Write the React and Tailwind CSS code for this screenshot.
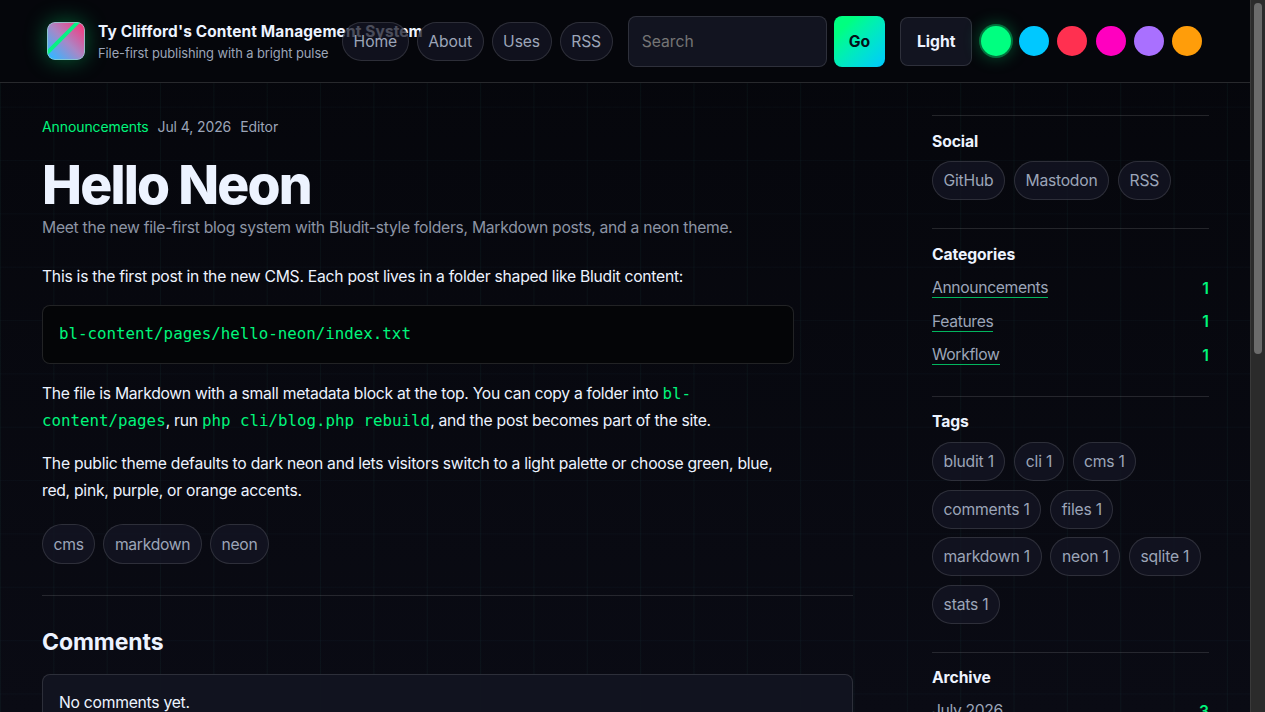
import { useState } from "react";
import clsx from "clsx";

const navLinks = ["Home", "About", "Uses", "RSS"];

const accents = [
  { name: "Green", color: "bg-[#00ff80]" },
  { name: "Blue", color: "bg-[#00c8ff]" },
  { name: "Red", color: "bg-[#ff3050]" },
  { name: "Pink", color: "bg-[#ff00bf]" },
  { name: "Purple", color: "bg-[#a970ff]" },
  { name: "Orange", color: "bg-[#ff9d0a]" },
];

const categories = ["Announcements", "Features", "Workflow"];

const tags = ["bludit", "cli", "cms", "comments", "files", "markdown", "neon", "sqlite", "stats"];

const Chip = ({ children, className }) => (
  <a
    href="#"
    className={clsx(
      "flex items-center rounded-full border border-white/12 bg-[#141624]/75 px-[10.6px] text-[15.7px] whitespace-nowrap text-[#9ca5b8]",
      className
    )}
  >
    {children}
  </a>
);

const Code = ({ children }) => (
  <code className="font-['DejaVu_Sans_Mono',monospace] text-[15.8px] tracking-normal text-[#00f57b]">
    {children}
  </code>
);

const Logo = () => (
  <svg
    viewBox="0 0 38 38"
    className="size-[38px] shrink-0 rounded-[8px] shadow-[0_0_22px_rgba(0,255,128,0.36)]"
  >
    <defs>
      <linearGradient id="logo" x1="0" y1="1" x2="1" y2="0">
        <stop offset="0.1" stopColor="#39b4ff" />
        <stop offset="0.5" stopColor="#a987c6" />
        <stop offset="0.9" stopColor="#f23f83" />
      </linearGradient>
      <clipPath id="logoBox">
        <rect width="38" height="38" rx="8" />
      </clipPath>
    </defs>
    <g clipPath="url(#logoBox)">
      <rect width="38" height="38" fill="url(#logo)" />
      <path d="M-2 33 L34 -3" stroke="#08f184" strokeWidth="3.8" />
    </g>
    <rect x="0.5" y="0.5" width="37" height="37" rx="7.5" fill="none" stroke="#8fd0d0" strokeOpacity="0.8" />
  </svg>
);

const Header = () => {
  const [accent, setAccent] = useState("Green");

  return (
    <header className="flex h-[83px] shrink-0 items-center border-b border-white/14 bg-[#05060b] pl-[47px]">
      {/* Brand, the long title runs under the nav */}
      <div className="flex w-[295px] items-center gap-[13px]">
        <Logo />
        <div className="w-[240px] pt-[2px] whitespace-nowrap">
          <div className="text-[15.4px] leading-[23px] font-bold tracking-[0.15px] text-[#edf3ff]">
            Ty Clifford's Content Management System
          </div>
          <div className="text-[12.9px] leading-[22px] tracking-[-0.07px] text-[#9ca5b8]">
            File-first publishing with a bright pulse
          </div>
        </div>
      </div>

      <nav className="relative flex gap-2">
        {navLinks.map((label) => (
          <Chip key={label} className="h-[39px] pt-[2px] tracking-[-0.12px]">
            {label}
          </Chip>
        ))}
      </nav>

      <form className="ml-[15px] flex gap-[7px]">
        <input
          type="search"
          placeholder="Search"
          className="h-[51px] w-[199px] rounded-[8px] border border-white/12 bg-[#121420] px-[13px] text-[15.7px] placeholder:text-[#757575]"
        />
        <button
          type="button"
          className="h-[51px] w-[51.5px] rounded-[8px] bg-linear-135 from-[#00ff80] from-20% to-[#00c8ff] pt-[2px] text-[15.7px] font-bold text-[#031018]"
        >
          Go
        </button>
      </form>

      <button className="ml-[15px] h-[49px] w-[72px] rounded-[8px] border border-white/12 bg-[#121420] pt-[2px] text-[15.7px] font-bold text-[#edf3ff]">
        Light
      </button>

      <div className="ml-[8.5px] flex gap-[8.3px]">
        {accents.map(({ name, color }) => (
          <button
            key={name}
            aria-label={name}
            onClick={() => setAccent(name)}
            className={clsx(
              "size-[30px] rounded-full",
              color,
              accent === name && "shadow-[0_0_0_2px_rgba(0,255,128,0.35),0_0_18px_rgba(0,255,128,0.4)]"
            )}
          />
        ))}
      </div>
    </header>
  );
};

const Article = () => (
  <main className="w-[811px] pt-[31px]">
    <div className="flex h-6 items-center gap-[9px] text-[14px] tracking-[-0.1px] text-[#9ca5b8]">
      <a href="#" className="text-[#00f57b]">
        Announcements
      </a>
      <span>Jul 4, 2026</span>
      <span>Editor</span>
    </div>

    <h1 className="mt-[19px] text-[53.4px] leading-[56px] font-extrabold tracking-[-1.8px] text-[#edf3ff]">
      Hello Neon
    </h1>
    <p className="mt-px text-[15.7px] leading-[27px] tracking-[-0.28px] text-[#8c94a4]">
      Meet the new file-first blog system with Bludit-style folders, Markdown posts, and a neon theme.
    </p>

    <div className="mt-[22px] w-[752px] text-[15.7px] leading-[27px] tracking-[-0.26px] text-[#edf3ff]">
      <p>This is the first post in the new CMS. Each post lives in a folder shaped like Bludit content:</p>
      <pre className="mt-[15px] flex h-[59px] items-center rounded-[8px] border border-white/12 bg-[#040507] px-[16px] pb-[2px]">
        <Code>bl-content/pages/hello-neon/index.txt</Code>
      </pre>
      <p className="mt-4">
        <span className="tracking-[-0.29px]">
          The file is Markdown with a small metadata block at the top. You can copy a folder into{" "}
        </span>
        <Code>bl-<br />content/pages</Code>, run <Code>php cli/blog.php rebuild</Code>, and the post becomes part
        of the site.
      </p>
      <p className="mt-4">
        The public theme defaults to dark neon and lets visitors switch to a light palette or choose green, blue,
        red, pink, purple, or orange accents.
      </p>
    </div>

    <div className="mt-5 flex gap-2">
      {["cms", "markdown", "neon"].map((tag) => (
        <Chip key={tag} className="h-10 pt-px tracking-[-0.3px]">
          {tag}
        </Chip>
      ))}
    </div>

    <section className="mt-[31px] border-t border-white/12 pt-[30px]">
      <h2 className="text-[23px] leading-[32px] font-bold tracking-[-0.1px] text-[#edf3ff]">Comments</h2>
      <p className="mt-[16px] h-[60px] rounded-[8px] border border-white/12 bg-[#121420]/95 px-4 pt-[14px] text-[15.7px] leading-[27px] tracking-[-0.26px] text-[#edf3ff]">
        No comments yet.
      </p>
    </section>
  </main>
);

const Panel = ({ title, className, children }) => (
  <section className={clsx("border-t border-white/12 pt-[11.5px]", className)}>
    <h2 className="text-[15.7px] leading-[27px] font-bold tracking-[-0.1px] text-[#edf3ff]">{title}</h2>
    {children}
  </section>
);

const CountRow = ({ label, count }) => (
  <li className="flex h-[33.3px] items-center justify-between text-[15.7px] text-[#9ca5b8]">
    <a href="#" className="border-b border-[#00ff80]/70 leading-[18px] tracking-[-0.36px]">
      {label}
    </a>
    <strong className="font-semibold text-[#00f57b]">{count}</strong>
  </li>
);

const Sidebar = () => (
  <aside className="w-[277px] pt-[32px]">
    <Panel title="Social" className="h-[113.4px]">
      <div className="mt-[6.5px] flex gap-[9px]">
        {["GitHub", "Mastodon", "RSS"].map((label) => (
          <Chip key={label} className="h-[39px] pt-px tracking-[-0.25px]">
            {label}
          </Chip>
        ))}
      </div>
    </Panel>

    <Panel title="Categories" className="h-[167.4px]">
      <ul className="mt-[4.2px]">
        {categories.map((label) => (
          <CountRow key={label} label={label} count={1} />
        ))}
      </ul>
    </Panel>

    <Panel title="Tags" className="h-[256px]">
      <div className="mt-[7px] flex flex-wrap gap-x-[8.8px] gap-y-[8.5px]">
        {tags.map((tag) => (
          <Chip key={tag} className="h-[39px] tracking-[-0.22px]">
            {tag} 1
          </Chip>
        ))}
      </div>
    </Panel>

    <Panel title="Archive">
      <ul className="mt-[4px]">
        <CountRow label="July 2026" count={3} />
      </ul>
    </Panel>
  </aside>
);

const App = () => (
  <div className="flex h-[712px] w-[1265px] overflow-hidden bg-[#05060b] font-['Inter',sans-serif]">
    <div className="relative flex w-[1250px] flex-col overflow-hidden bg-[linear-gradient(90deg,rgba(80,230,200,0.045)_1px,transparent_1px),linear-gradient(rgba(80,190,230,0.028)_1px,transparent_1px),linear-gradient(#05060b,#0a0b14)] bg-size-[53.35px_53.35px,53.35px_53.35px,100%_100%]">
      <Header />
      <div className="flex items-start justify-between pr-[41px] pl-[42px]">
        <Article />
        <Sidebar />
      </div>
    </div>

    {/* Scrollbar */}
    <div className="flex w-[15px] justify-center border-l border-[#3a3a3a] bg-[#2b2b2b] pt-[3px]">
      <div className="h-[351px] w-2 rounded-full bg-[#6b6b6b]" />
    </div>
  </div>
);

export default App;
